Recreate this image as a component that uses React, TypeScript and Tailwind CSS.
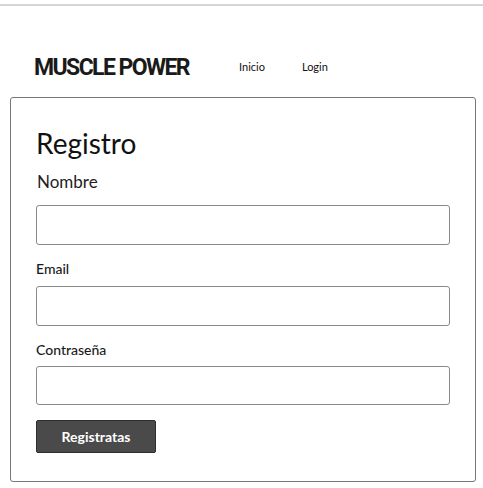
import React from "react";

export default function App() {
  return (
    <div className="min-h-[488px] w-[483px] bg-white text-[#111]" style={{ fontFamily: "Lato, 'Noto Sans', sans-serif" }}>
      <div className="pt-[4px]">
        <div className="h-[2px] bg-[#d6d6d6]" />
      </div>
      <header className="flex items-center h-[46px] mt-[38px] pl-[34px]">
        <div className="text-[23px] font-bold tracking-[-1.6px] text-[#1a1a1a] w-[205px] leading-none" style={{ fontFamily: "Roboto, sans-serif" }}>MUSCLE POWER</div>
        <nav className="flex items-center gap-[37px] text-[11px] text-[#111]">
          <a>Inicio</a>
          <a>Login</a>
        </nav>
      </header>
      <main className="ml-[10px] w-[466px] h-[385px] mt-[7px] border border-[#777] rounded-[3px] px-[25px] pt-[27px]">
        <h1 className="text-[28px] leading-[36px] text-[#111]">Registro</h1>
        <div className="mt-[10px] text-[17px] leading-[22px] text-[#222] pl-[1px]">Nombre</div>
        <div className="mt-[12px] h-[40px] w-[414px] border border-[#8a8a8a] rounded-[3px]" />
        <div className="mt-[14px] text-[14px] leading-[20px] font-medium text-[#1a1a1a]">Email</div>
        <div className="mt-[7px] h-[40px] w-[414px] border border-[#8a8a8a] rounded-[3px]" />
        <div className="mt-[14px] text-[14px] leading-[20px] font-medium text-[#1a1a1a]">Contraseña</div>
        <div className="mt-[6px] h-[39px] w-[414px] border border-[#8a8a8a] rounded-[3px]" />
        <button className="mt-[15px] h-[33px] w-[120px] bg-[#4a4a4a] border border-[#2e2e2e] rounded-[2px] text-white text-[14px] font-bold">Registratas</button>
      </main>
    </div>
  );
}
